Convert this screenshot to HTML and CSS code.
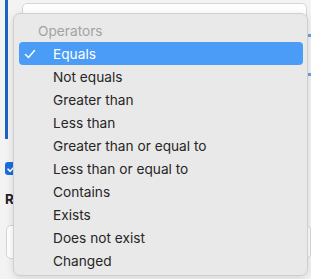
FILE: index.html
```html
<!DOCTYPE html>
<html>
<head>
<meta charset="utf-8">
<link rel="stylesheet" href="styles.css">
</head>
<body>
<div class="page">
  <div class="panel">
    <div class="field"></div>
    <div class="side">
      <span class="dash"></span>
      <span class="dash"></span>
    </div>
  </div>
  <div class="check"><svg width="10" height="10" viewBox="0 0 10 10"><path d="M2 5.2 L4.2 7.3 L8 3" fill="none" stroke="#fff" stroke-width="1.6" stroke-linecap="round" stroke-linejoin="round"/></svg></div>
  <div class="label">R</div>
  <div class="field2"></div>
</div>

<div class="menu">
  <div class="header">Operators</div>
  <div class="item selected">
    <svg class="tick" width="12" height="12" viewBox="0 0 12 12"><path d="M1.5 6.5 L4.5 9.5 L10.5 2.5" fill="none" stroke="#fff" stroke-width="1.5" stroke-linecap="round" stroke-linejoin="round"/></svg>
    <span>Equals</span>
  </div>
  <div class="item"><span>Not equals</span></div>
  <div class="item"><span>Greater than</span></div>
  <div class="item"><span>Less than</span></div>
  <div class="item"><span>Greater than or equal to</span></div>
  <div class="item"><span>Less than or equal to</span></div>
  <div class="item"><span>Contains</span></div>
  <div class="item"><span>Exists</span></div>
  <div class="item"><span>Does not exist</span></div>
  <div class="item"><span>Changed</span></div>
</div>
</body>
</html>
```

FILE: styles.css
```css
html, body {
  margin: 0;
  padding: 0;
}
body {
  width: 311px;
  height: 279px;
  overflow: hidden;
  background: #f3f3f3;
  font-family: Inter, "Noto Sans", sans-serif;
  position: relative;
}
.page {
  padding-left: 5px;
}
.panel {
  border-left: 3px solid #1e63c4;
  height: 139px;
  display: flex;
  padding-left: 14px;
  padding-top: 3px;
  box-sizing: border-box;
}
.field {
  flex: 1;
  height: 40px;
  background: #fff;
  border: 1px solid #d6d6d6;
  border-radius: 5px;
}
.side {
  width: 4px;
  display: flex;
  flex-direction: column;
  gap: 36px;
  padding-top: 31px;
}
.dash {
  height: 3px;
  background: #6e9fd8;
}
.check {
  margin-top: 23px;
  width: 11px;
  height: 13px;
  background: #1a6ddb;
  border-radius: 3px;
  display: flex;
  align-items: center;
  justify-content: center;
}
.label {
  margin-top: 16px;
  font-weight: 700;
  font-size: 13.5px;
  color: #222;
  line-height: 16px;
}
.field2 {
  margin-top: 18px;
  margin-left: 1px;
  height: 32px;
  background: #fff;
  border: 1px solid #d6d6d6;
  border-radius: 5px;
}
.menu {
  position: absolute;
  left: 13px;
  top: 13px;
  width: 295px;
  height: 263px;
  box-sizing: border-box;
  background: #e9e9e9;
  border: 1px solid #cfcfcf;
  border-radius: 7px;
  box-shadow: 0 2px 8px rgba(0,0,0,0.12);
  padding: 5px 4px 4px 5px;
  font-size: 13.7px;
  color: #262626;
}
.header {
  height: 23px;
  line-height: 24px;
  padding-left: 19px;
  color: #a3a3a3;
}
.item {
  height: 23px;
  line-height: 24px;
  padding-left: 34px;
  border-radius: 4px;
  position: relative;
}
.item.selected {
  background: #4a9cf7;
  color: #fff;
}
.tick {
  position: absolute;
  left: 5px;
  top: 6px;
}
```
